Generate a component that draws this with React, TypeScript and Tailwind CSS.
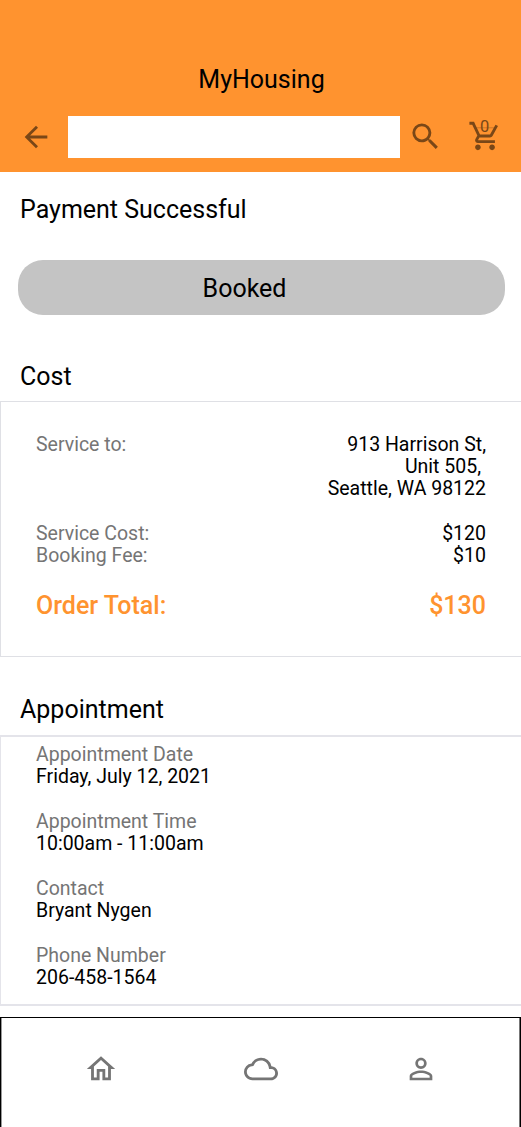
import { MdArrowBack, MdSearch, MdOutlineHome, MdOutlineCloud, MdPersonOutline } from "react-icons/md";

const appointment = [
  ["Appointment Date", "Friday, July 12, 2021"],
  ["Appointment Time", "10:00am - 11:00am"],
  ["Contact", "Bryant Nygen"],
  ["Phone Number", "206-458-1564"],
];

function CartIcon() {
  return (
    <svg width="34" height="34" viewBox="0 0 24 24" fill="currentColor">
      <path d="M7 18c-1.1 0-1.99.9-1.99 2S5.900 22 7 22s2-.9 2-2-.9-2-2-2zm10 0c-1.1 0-1.99.9-1.99 2s.89 2 1.990 2 2-.9 2-2-.9-2-2-2zm-9.830-3.250l.03-.12.9-1.630h7.450c.75 0 1.410-.41 1.750-1.030l3.860-7.010L19.420 4h-.01l-1.100 2-2.760 5H8.530l-.13-.27L6.160 6l-.95-2-.94-2H1v2h2l3.600 7.590-1.350 2.450c-.16.280-.25.610-.25.960 0 1.100.9 2 2 2h12v-2H7.420c-.13 0-.25-.11-.25-.25z" />
      <path d="M6 6.200H18.400" stroke="currentColor" strokeWidth=".5" opacity=".5" />
    </svg>
  );
}

export default function App() {
  return (
    <div className="flex h-[1127px] w-[521px] flex-col overflow-hidden bg-white font-['Roboto',sans-serif] text-black">
      <header className="h-[171.500px] shrink-0 bg-[#ff932f] pt-[65px]">
        <h1 className="pl-[2px] text-center text-[25px] leading-[30px]">MyHousing</h1>
        <div className="mt-[21px] flex items-center pl-[19px] text-[#7a4717]">
          <MdArrowBack size={34} />
          <div className="ml-[15px] h-[42px] w-[332px] bg-white" />
          <MdSearch className="mb-[1px] ml-[8px]" size={35} />
          <div className="relative mb-[2px] ml-[25px]">
            <CartIcon />
            <span className="absolute left-[12px] top-[0px] text-[16.500px] leading-[16px]">0</span>
          </div>
        </div>
      </header>
      <h2 className="mt-[23px] pl-[20px] text-[25px] leading-[30px]">Payment Successful</h2>
      <button className="ml-[18px] mt-[35px] h-[55.500px] w-[487px] shrink-0 rounded-[25px] bg-[#c4c4c4] pr-[34px] pt-[2px] text-[25px]">Booked</button>
      <h2 className="mt-[47px] pl-[20px] text-[25px] leading-[30px]">Cost</h2>
      <section className="mt-[9px] h-[256px] shrink-0 border border-r-0 border-[#dfe0e5] pl-[35px] pr-[35px] pt-[31.700px] text-[19.500px] leading-[22.300px]">
        <div className="flex justify-between">
          <span className="text-[#757575]">Service to:</span>
          <div className="text-right">
            <p>913 Harrison St,</p>
            <p className="pr-[5px]">Unit 505,</p>
            <p>Seattle, WA 98122</p>
          </div>
        </div>
        <div className="mt-[22.300px] flex justify-between"><span className="text-[#757575]">Service Cost:</span><span>$120</span></div>
        <div className="flex justify-between"><span className="text-[#757575]">Booking Fee:</span><span>$10</span></div>
        <div className="mt-[23.300px] flex justify-between text-[25px] font-medium leading-[30px] text-[#ff932f]"><span>Order Total:</span><span>$130</span></div>
      </section>
      <h2 className="mt-[38px] pl-[20px] text-[25px] leading-[30px]">Appointment</h2>
      <section className="mt-[10px] flex h-[271px] shrink-0 flex-col gap-[22.300px] border-y-2 border-l border-[#e4e4ea] pl-[35px] pt-[7px] text-[19.500px] leading-[22.300px]">
        {appointment.map(([label, value]) => (
          <div key={label}><p className="text-[#757575]">{label}</p><p>{value}</p></div>
        ))}
      </section>
      <nav className="mt-[11px] flex h-[110px] shrink-0 justify-between border border-b-0 border-black pl-[83px] pr-[82px] pt-[33.500px] text-[#757575] shadow-[inset_1px_0_0_#999,inset_-1px_0_0_#777]">
        <MdOutlineHome size={34} />
        <MdOutlineCloud size={34} />
        <MdPersonOutline size={34} />
      </nav>
    </div>
  );
}
